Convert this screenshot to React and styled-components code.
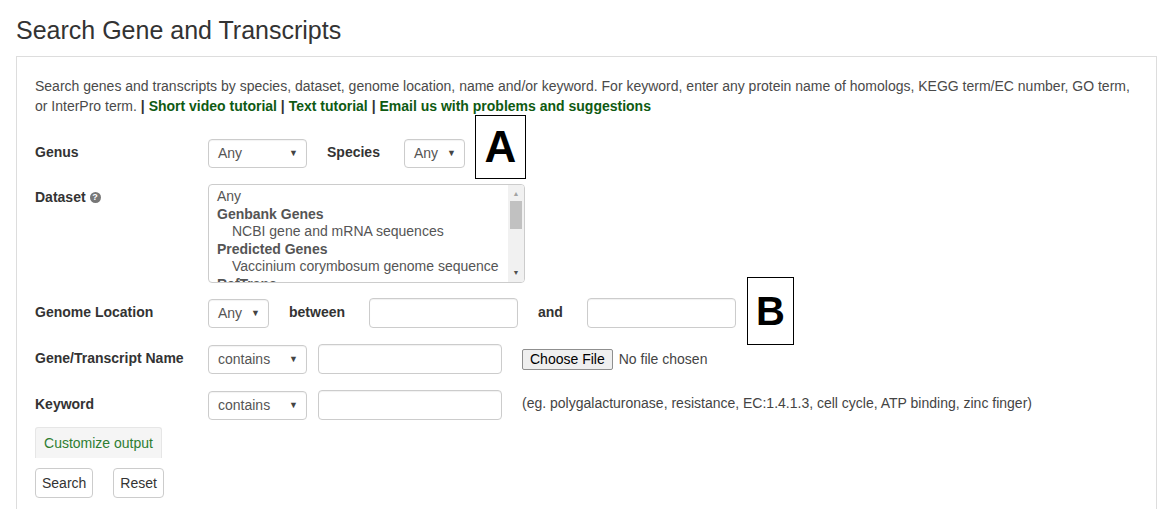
import React from 'react';
import styled, { createGlobalStyle } from 'styled-components';

const GlobalStyle = createGlobalStyle`
  html, body {
    margin: 0;
    padding: 0;
    background: #fff;
  }
  body {
    font-family: 'Liberation Sans', Arial, sans-serif;
    color: #333;
  }
`;

const Page = styled.div`
  position: relative;
  padding: 16px 16px 0 16px;
  width: 1173px;
  height: 509px;
  box-sizing: border-box;
  overflow: hidden;
`;

const Title = styled.h1`
  margin: 0 0 12px 0;
  font-size: 25px;
  line-height: 28px;
  font-weight: normal;
  color: #333;
`;

const Panel = styled.div`
  border: 1px solid #ddd;
  border-bottom: none;
  padding: 19px 18px 40px 18px;
  min-height: 480px;
`;

const Intro = styled.p`
  margin: 0 0 22px 0;
  font-size: 14px;
  line-height: 20px;
  color: #4a4a4a;
`;

const IntroLink = styled.a`
  color: #0f5a12;
  font-weight: bold;
  text-decoration: none;
`;

const Sep = styled.b`
  color: #333;
`;

const Row = styled.div`
  display: flex;
  align-items: ${({ $top }) => ($top ? 'flex-start' : 'center')};
  min-height: 30px;
  margin-bottom: ${({ $mb }) => $mb ?? 16}px;
`;

const Label = styled.div`
  width: 173px;
  flex-shrink: 0;
  font-size: 14px;
  font-weight: bold;
  color: #333;
  padding-top: ${({ $top }) => ($top ? '5px' : '0')};
  padding-bottom: ${({ $top }) => ($top ? '0' : '2px')};
  display: flex;
  align-items: center;
  gap: 4px;
`;

const Controls = styled.div`
  display: flex;
  align-items: center;
  gap: 20px;
`;

const Pair = styled.div`
  display: flex;
  align-items: center;
  gap: 11px;
`;

const InlineLabel = styled.span`
  font-size: 14px;
  font-weight: bold;
  color: #333;
  padding-right: 4px;
  padding-bottom: 2px;
`;

const Select = styled.div`
  box-sizing: border-box;
  width: ${({ $w }) => $w}px;
  height: 29px;
  border: 1px solid #ccc;
  border-radius: 4px;
  padding: 0 8px 0 9px;
  display: flex;
  align-items: center;
  justify-content: space-between;
  font-size: 14px;
  color: #555;
  background: #fff;
  box-shadow: inset 0 1px 1px rgba(0, 0, 0, 0.05);
`;

const Caret = styled.span`
  font-size: 9px;
  color: #444;
`;

const Input = styled.div`
  box-sizing: border-box;
  width: ${({ $w }) => $w}px;
  height: 30px;
  border: 1px solid #ccc;
  border-radius: 4px;
  background: #fff;
  box-shadow: inset 0 1px 1px rgba(0, 0, 0, 0.06);
`;

const ListBox = styled.div`
  box-sizing: border-box;
  width: 317px;
  height: 99px;
  border: 1px solid #ccc;
  border-radius: 4px;
  display: flex;
  overflow: hidden;
  background: #fff;
`;

const Options = styled.div`
  flex: 1;
  padding: 3px 0 0 8px;
  font-size: 14px;
  line-height: 17.5px;
  color: #555;
  white-space: nowrap;
  overflow: hidden;
`;

const Option = styled.div`
  font-weight: ${({ $group }) => ($group ? 'bold' : 'normal')};
  padding-left: ${({ $indent }) => ($indent ? '15px' : '0')};
`;

const Scrollbar = styled.div`
  width: 16px;
  background: #f1f1f1;
  display: flex;
  flex-direction: column;
  align-items: center;
  padding: 4px 0;
  box-sizing: border-box;
`;

const Arrow = styled.span`
  font-size: 7px;
  line-height: 10px;
  color: ${({ $dim }) => ($dim ? '#a3a3a3' : '#505050')};
`;

const Thumb = styled.div`
  width: 12px;
  height: 28px;
  margin-top: 2px;
  background: #c1c1c1;
`;

const Spacer = styled.div`
  flex: 1;
`;

const HelpIcon = styled.span`
  display: inline-flex;
  width: 11px;
  height: 11px;
  border-radius: 50%;
  background: #777;
  color: #fff;
  font-size: 9px;
  font-weight: bold;
  align-items: center;
  justify-content: center;
`;

const FileButton = styled.div`
  box-sizing: border-box;
  height: 21px;
  padding: 0 7px;
  border: 1px solid #8f8f8f;
  border-radius: 2px;
  background: #efefef;
  font-size: 14px;
  color: #000;
  display: flex;
  align-items: center;
`;

const FileStatus = styled.span`
  font-size: 14px;
  color: #444;
  margin-left: -14px;
`;

const Hint = styled.span`
  font-size: 14px;
  color: #444;
  margin-top: -5px;
`;

const Tab = styled.div`
  display: inline-flex;
  box-sizing: border-box;
  width: 127px;
  height: 31px;
  align-items: center;
  justify-content: center;
  background: #f5f5f5;
  border: 1px solid #e6e6e6;
  border-bottom: none;
  border-radius: 3px 3px 0 0;
  font-size: 14px;
  color: #2e7d32;
  margin: 0 0 10px 0;
`;

const Buttons = styled.div`
  display: flex;
  gap: 20px;
`;

const Button = styled.div`
  box-sizing: border-box;
  height: 30px;
  padding: 0 6px;
  border: 1px solid #ccc;
  border-radius: 4px;
  background: #fff;
  font-size: 14px;
  color: #333;
  display: flex;
  align-items: center;
`;

const Marker = styled.div`
  position: absolute;
  left: ${({ $x }) => $x}px;
  top: ${({ $y }) => $y}px;
  width: ${({ $w }) => $w}px;
  height: ${({ $h }) => $h}px;
  box-sizing: border-box;
  border: 1px solid #000;
  background: #fff;
  display: flex;
  align-items: center;
  justify-content: center;
  font-family: 'Liberation Sans', Arial, sans-serif;
  font-weight: bold;
  font-size: ${({ $fs }) => $fs}px;
  color: #000;
`;

function Dropdown({ width, value }) {
  return (
    <Select $w={width}>
      <span>{value}</span>
      <Caret>▼</Caret>
    </Select>
  );
}

export default function App() {
  return (
    <Page>
      <GlobalStyle />
      <Title>Search Gene and Transcripts</Title>
      <Panel>
        <Intro>
          Search genes and transcripts by species, dataset, genome location, name and/or keyword. For keyword,
          enter any protein name of homologs, KEGG term/EC number, GO term, or InterPro term. <Sep>|</Sep>{' '}
          <IntroLink>Short video tutorial</IntroLink> <Sep>|</Sep> <IntroLink>Text tutorial</IntroLink>{' '}
          <Sep>|</Sep> <IntroLink>Email us with problems and suggestions</IntroLink>
        </Intro>

        <Row>
          <Label>Genus</Label>
          <Controls>
            <Dropdown width={99} value="Any" />
            <InlineLabel>Species</InlineLabel>
            <Dropdown width={61} value="Any" />
          </Controls>
        </Row>

        <Row $top $mb={15}>
          <Label $top>
            Dataset <HelpIcon>?</HelpIcon>
          </Label>
          <ListBox>
            <Options>
              <Option>Any</Option>
              <Option $group>Genbank Genes</Option>
              <Option $indent>NCBI gene and mRNA sequences</Option>
              <Option $group>Predicted Genes</Option>
              <Option $indent>Vaccinium corymbosum genome sequence</Option>
              <Option $group>RefTrans</Option>
            </Options>
            <Scrollbar>
              <Arrow $dim>▲</Arrow>
              <Thumb />
              <Spacer />
              <Arrow>▼</Arrow>
            </Scrollbar>
          </ListBox>
        </Row>

        <Row>
          <Label>Genome Location</Label>
          <Controls>
            <Dropdown width={61} value="Any" />
            <InlineLabel>between</InlineLabel>
            <Input $w={149} />
            <InlineLabel>and</InlineLabel>
            <Input $w={149} />
          </Controls>
        </Row>

        <Row>
          <Label>Gene/Transcript Name</Label>
          <Controls>
            <Pair>
              <Dropdown width={99} value="contains" />
              <Input $w={184} />
            </Pair>
            <FileButton>Choose File</FileButton>
            <FileStatus>No file chosen</FileStatus>
          </Controls>
        </Row>

        <Row $mb={7}>
          <Label>Keyword</Label>
          <Controls>
            <Pair>
              <Dropdown width={99} value="contains" />
              <Input $w={184} />
            </Pair>
            <Hint>(eg. polygalacturonase, resistance, EC:1.4.1.3, cell cycle, ATP binding, zinc finger)</Hint>
          </Controls>
        </Row>

        <Tab>Customize output</Tab>

        <Buttons>
          <Button>Search</Button>
          <Button>Reset</Button>
        </Buttons>
      </Panel>

      <Marker $x={475} $y={115} $w={51} $h={64} $fs={44}>
        A
      </Marker>
      <Marker $x={747} $y={277} $w={47} $h={68} $fs={40}>
        B
      </Marker>
    </Page>
  );
}
